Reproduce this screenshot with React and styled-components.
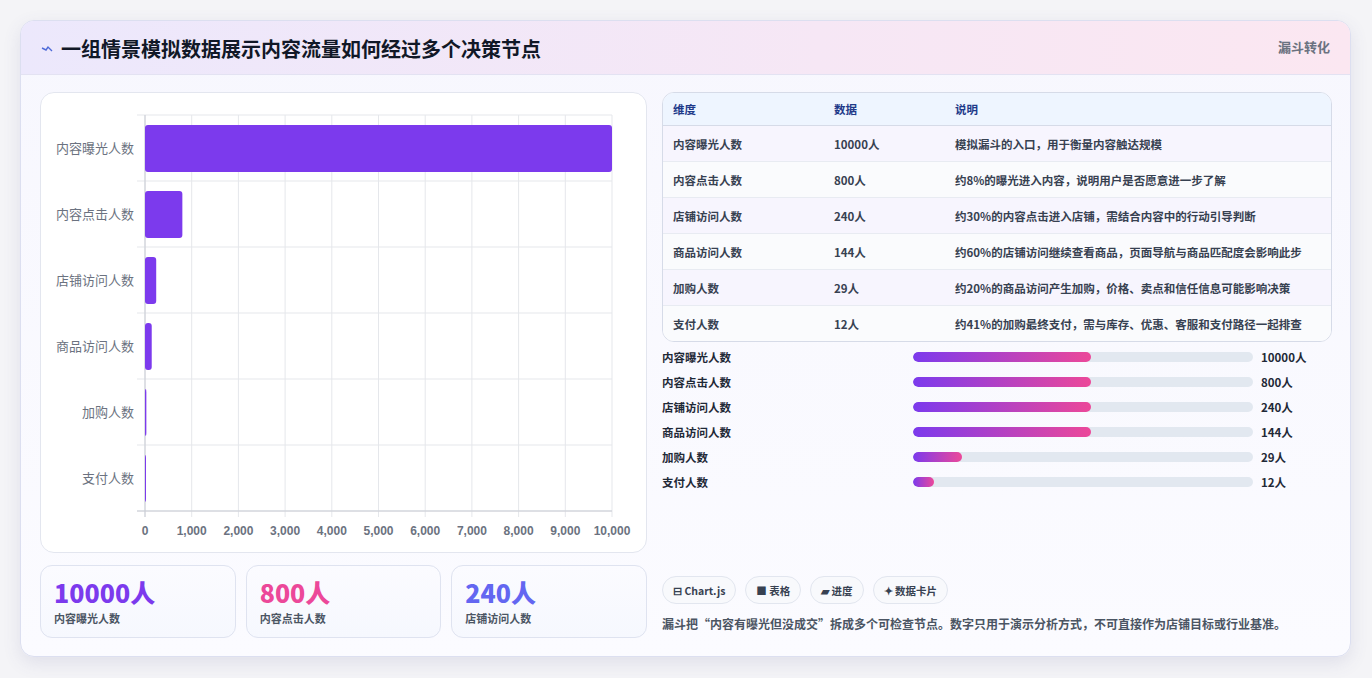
import React from "react";
import styled, { createGlobalStyle } from "styled-components";

const G = createGlobalStyle`
  body{margin:0;background:#f3f4f6;font-family:"Noto Sans CJK SC","Noto Sans",sans-serif;}
`;
const Page = styled.div`padding:20px 21px 21px 20px;height:678px;box-sizing:border-box;background:#f4f4f7;`;
const Card = styled.div`border:1px solid #dcdff0;border-radius:14px;overflow:hidden;background:linear-gradient(180deg,#f7f7fe,#fbfbff);box-shadow:0 6px 18px rgba(80,80,140,.12);height:637px;box-sizing:border-box;display:flex;flex-direction:column;`;
const Head = styled.div`height:55px;box-sizing:border-box;display:flex;justify-content:space-between;align-items:flex-start;padding:0 20px;background:linear-gradient(90deg,#ece8fc,#f6e7f5 60%,#fbe7f1);border-bottom:1px solid #e3e2f2;`;
const Title = styled.h1`margin:0;margin-top:13px;font-size:20px;font-weight:700;color:#111827;display:flex;align-items:center;gap:8px;`;
const Tag = styled.div`margin-top:16px;font-size:13px;font-weight:700;color:#6b7280;`;
const Body = styled.div`flex:1;display:grid;grid-template-columns:607px 1fr;gap:15px;padding:17px 18px 18px 19px;`;
const Col = styled.div`display:flex;flex-direction:column;gap:12px;`;
const ChartBox = styled.div`height:461px;box-sizing:border-box;background:#fff;border:1px solid #e3e6ef;border-radius:14px;`;
const Stats = styled.div`display:grid;grid-template-columns:repeat(3,1fr);gap:10px;`;
const Stat = styled.div`height:73px;box-sizing:border-box;border:1px solid #dfe3f0;border-radius:12px;background:linear-gradient(180deg,#fbfbff,#f6f8fe);padding:9px 13px;`;
const Big = styled.div`font-size:25px;font-weight:800;color:${p=>p.c};line-height:34px;`;
const Small = styled.div`font-size:11px;font-weight:600;color:#4b5563;margin-top:1px;`;
const Table = styled.div`border:1px solid #d6dbe8;border-radius:12px;overflow:hidden;background:#fff;`;
const Row = styled.div`display:grid;grid-template-columns:161px 121px 1fr;height:${p=>p.h?32:35}px;align-items:center;padding-left:10px;font-size:11.5px;font-weight:${p=>p.h?700:600};color:${p=>p.h?"#1e3a8a":"#374151"};background:${p=>p.h?"#eef5ff":p.alt?"#fafbfd":"#f7f5fe"};border-top:${p=>p.first?"none":"1px solid "+(p.h2?"#d6dbe8":"#e8ebf2")};`;
const Bars = styled.div`display:flex;flex-direction:column;gap:7px;margin-top:6px;`;
const BarRow = styled.div`display:grid;grid-template-columns:251px 348px 1fr;align-items:center;height:18px;font-size:11.5px;font-weight:700;color:#1f2937;gap:0;`;
const Track = styled.div`height:10px;border-radius:5px;background:#e2e8f0;overflow:hidden;margin-right:8px;`;
const Fill = styled.div`height:100%;border-radius:5px;background:linear-gradient(90deg,#7c3aed,#ec4899);`;
const Spacer = styled.div`flex:1;`;
const Chips = styled.div`display:flex;gap:9px;`;
const Chip = styled.div`height:28px;box-sizing:border-box;padding:0 10px;border:1px solid #e2e6ef;border-radius:14px;background:#f8f9fc;font-size:10.5px;font-weight:700;color:#374151;display:flex;align-items:center;gap:3px;`;
const Note = styled.p`margin:11px 0 6px;font-size:12px;font-weight:700;color:#4b5563;white-space:nowrap;`;

const cats=["内容曝光人数","内容点击人数","店铺访问人数","商品访问人数","加购人数","支付人数"];
const vals=[10000,800,240,144,29,12];

function Chart(){
  const x0=104,x1=571,y0=22,rh=66;
  const sx=v=>x0+(x1-x0)*v/10000;
  return <svg width="605" height="459">
    {Array.from({length:11}).map((_,i)=>{const x=x0+(x1-x0)*i/10;return <g key={i}>
      <line x1={x} x2={x} y1={y0} y2={y0+rh*6+6} stroke="#e5e7eb"/>
      <text x={x} y={442} fontSize="12" fontWeight="700" fill="#6b7280" textAnchor="middle" fontFamily="Liberation Sans,sans-serif">{i===0?"0":(i*1000).toLocaleString("en-US")}</text></g>})}
    {Array.from({length:7}).map((_,i)=><line key={i} x1={x0-8} x2={x1} y1={y0+rh*i} y2={y0+rh*i} stroke="#e5e7eb"/>)}
    <line x1={x0} x2={x0} y1={y0} y2={y0+rh*6+6} stroke="#c9ccd4"/>
    <line x1={x0-8} x2={x1} y1={y0+rh*6} y2={y0+rh*6} stroke="#c9ccd4"/>
    {cats.map((c,i)=>{const y=y0+rh*i;return <g key={c}>
      <rect x={x0} y={y+10} width={Math.max(sx(vals[i])-x0,1)} height={47} rx="3" fill="#7c3aed"/>
      <text x={x0-11} y={y+38} fontSize="13" fill="#6b7280" textAnchor="end">{c}</text></g>})}
  </svg>;
}

export default function App(){
  const desc=["模拟漏斗的入口，用于衡量内容触达规模","约8%的曝光进入内容，说明用户是否愿意进一步了解","约30%的内容点击进入店铺，需结合内容中的行动引导判断","约60%的店铺访问继续查看商品，页面导航与商品匹配度会影响此步","约20%的商品访问产生加购，价格、卖点和信任信息可能影响决策","约41%的加购最终支付，需与库存、优惠、客服和支付路径一起排查"];
  const pct=[52.3,52.3,52.3,52.3,14.5,6.3];
  return <Page><G/><Card>
    <Head><Title><svg width="12" height="12" viewBox="0 0 12 12"><path d="M1 5l4 2 2-3 4 4" stroke="#4f6bd8" strokeWidth="1.4" fill="none"/></svg>一组情景模拟数据展示内容流量如何经过多个决策节点</Title><Tag>漏斗转化</Tag></Head>
    <Body>
      <Col>
        <ChartBox><Chart/></ChartBox>
        <Stats>
          <Stat><Big c="#7c3aed">10000人</Big><Small>内容曝光人数</Small></Stat>
          <Stat><Big c="#ec4899">800人</Big><Small>内容点击人数</Small></Stat>
          <Stat><Big c="#6366f1">240人</Big><Small>店铺访问人数</Small></Stat>
        </Stats>
      </Col>
      <Col style={{gap:0}}>
        <Table>
          <Row h first><span>维度</span><span>数据</span><span>说明</span></Row>
          {cats.map((c,i)=><Row key={c} alt={i%2===1} h2={i===0}><span>{c}</span><span>{vals[i]}人</span><span>{desc[i]}</span></Row>)}
        </Table>
        <Bars>
          {cats.map((c,i)=><BarRow key={c}><span>{c}</span><Track><Fill style={{width:pct[i]+"%"}}/></Track><span>{vals[i]}人</span></BarRow>)}
        </Bars>
        <Spacer/>
        <Chips><Chip>⊟ Chart.js</Chip><Chip>■ 表格</Chip><Chip>▰ 进度</Chip><Chip>✦ 数据卡片</Chip></Chips>
        <Note>漏斗把“内容有曝光但没成交”拆成多个可检查节点。数字只用于演示分析方式，不可直接作为店铺目标或行业基准。</Note>
      </Col>
    </Body>
  </Card></Page>;
}
